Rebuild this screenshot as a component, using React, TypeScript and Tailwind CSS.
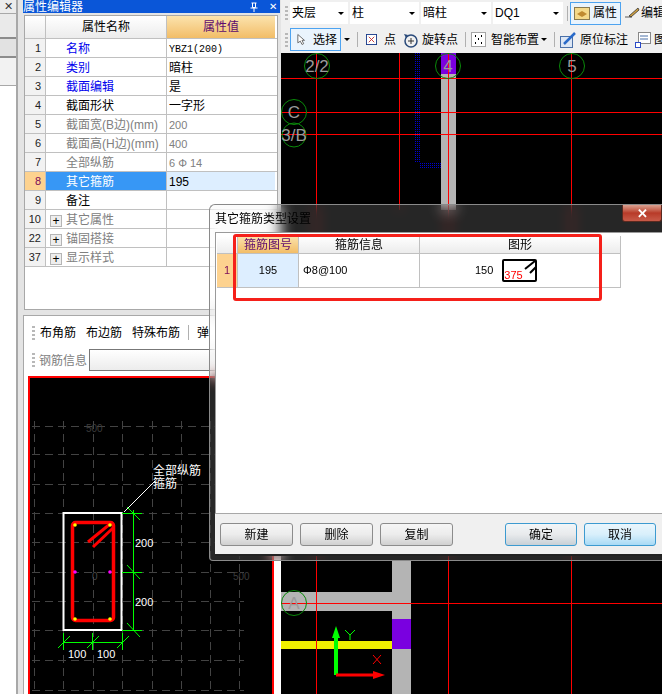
import type { ReactNode } from 'react';

const FONT = "font-['Liberation_Sans','Noto_Sans_CJK_SC',sans-serif]";

type Row = {
  no: string;
  name: string;
  value?: string;
  tone: 'blue' | 'black' | 'gray';
  plus?: boolean;
  active?: boolean;
  mono?: boolean;
};

const ROWS: Row[] = [
  { no: '1', name: '名称', value: 'YBZ1(200)', tone: 'blue', mono: true },
  { no: '2', name: '类别', value: '暗柱', tone: 'blue' },
  { no: '3', name: '截面编辑', value: '是', tone: 'blue' },
  { no: '4', name: '截面形状', value: '一字形', tone: 'black' },
  { no: '5', name: '截面宽(B边)(mm)', value: '200', tone: 'gray' },
  { no: '6', name: '截面高(H边)(mm)', value: '400', tone: 'gray' },
  { no: '7', name: '全部纵筋', value: '6 Φ 14', tone: 'gray' },
  { no: '8', name: '其它箍筋', value: '195', tone: 'black', active: true },
  { no: '9', name: '备注', tone: 'black' },
  { no: '10', name: '其它属性', tone: 'gray', plus: true },
  { no: '22', name: '锚固搭接', tone: 'gray', plus: true },
  { no: '37', name: '显示样式', tone: 'gray', plus: true },
];

function Grip() {
  return (
    <div className="flex w-[3px] shrink-0 flex-col gap-[2px]">
      {[0, 1, 2, 3].map(i => (
        <div key={i} className="h-[2px] w-[3px] bg-[#b8b8b8]" />
      ))}
    </div>
  );
}

function Sep() {
  return <div className="h-[15px] w-px shrink-0 bg-[#b0b0b0]" />;
}

function Caret() {
  return <div className="h-0 w-0 shrink-0 border-x-[3px] border-t-[3px] border-x-transparent border-t-black" />;
}

function PropertyTable() {
  return (
    <div className="ml-px mr-[3px] mt-[2px] flex h-[295px] flex-col border border-[#a8a8a8] bg-white">
      <div className="flex h-[23px] border-b border-[#c0c0c0] text-[12px]">
        <div className="w-[21px] border-r border-[#c0c0c0] bg-gradient-to-b from-white to-[#ececec]" />
        <div className="flex w-[121px] items-center justify-center border-r border-[#c0c0c0] bg-gradient-to-b from-white to-[#ececec] text-black">
          属性名称
        </div>
        <div className="flex w-[108px] items-center justify-center bg-gradient-to-b from-[#fbe3ad] to-[#f2bd66] text-[#5d0a6e]">
          属性值
        </div>
      </div>
      {ROWS.map(r => (
        <div key={r.no} className="flex h-[19px] border-b border-[#c0c0c0] text-[12px] leading-[15px]">
          <div
            className={`w-[21px] border-r border-[#c0c0c0] pr-1 pt-[2px] text-right text-[11px] ${
              r.active ? 'bg-[#fdd28f] text-[#7a0a5a]' : 'bg-[#f2f2f2] text-[#222]'
            }`}
          >
            {r.no}
          </div>
          <div
            className={`flex w-[121px] items-center border-r border-[#c0c0c0] pt-[3px] ${
              r.active ? 'bg-[#3797f5] text-white' : ''
            } ${r.tone === 'blue' ? 'text-[#0000ee]' : ''} ${r.tone === 'gray' ? 'text-[#808080]' : ''} ${
              r.tone === 'black' && !r.active ? 'text-black' : ''
            }`}
          >
            <div className="flex w-[20px] justify-center">
              {r.plus && (
                <div className="flex h-[12px] w-[12px] items-center justify-center border border-[#b5b5b5] bg-[#eee] text-[12px] leading-none text-black">
                  +
                </div>
              )}
            </div>
            <span className="whitespace-nowrap">{r.name}</span>
          </div>
          <div
            className={`flex w-[108px] items-center whitespace-pre pl-[2px] pt-[2px] ${r.active ? 'bg-[#ddeeff] text-black' : ''} ${
              r.tone === 'gray' ? 'text-[11px] text-[#808080]' : 'text-black'
            } ${r.mono ? "font-['Liberation_Mono'] text-[10px]" : ''}`}
          >
            {r.value}
          </div>
        </div>
      ))}
    </div>
  );
}

function SectionDrawing() {
  const xs = [34, 63, 93, 122, 152, 181, 210, 239];
  const ys = [427, 455, 485, 514, 543, 573, 602, 631, 661, 691];
  return (
    <svg viewBox="30 379 242 315" className="block h-[315px] w-[242px]">
      <g shapeRendering="crispEdges" stroke="#434343" strokeDasharray="8 5">
        {xs.map(x => (
          <line key={x} x1={x + 0.5} x2={x + 0.5} y1={422} y2={694} />
        ))}
        {ys.map(y => (
          <line key={y} x1={32} x2={244} y1={y + 0.5} y2={y + 0.5} />
        ))}
      </g>
      <text x="86" y="433" fontSize="10" fill="#3c3c3c">500</text>
      <text x="92" y="581" fontSize="10" fill="#4a4a4a">0</text>
      <text x="233" y="581" fontSize="10" fill="#3c3c3c">500</text>

      <rect x="63.5" y="514" width="58" height="117" fill="none" stroke="#fff" strokeWidth="2" />
      <rect x="72.5" y="523.5" width="41" height="98" rx="3" fill="none" stroke="#f00" strokeWidth="3.5" />
      <line x1="110" y1="525" x2="88" y2="543" stroke="#f00" strokeWidth="3" />
      <line x1="113" y1="529" x2="93" y2="548" stroke="#f00" strokeWidth="3" />
      {[[75, 526], [110, 526], [75, 620], [110, 620]].map(([cx, cy]) => (
        <circle key={`${cx}-${cy}`} cx={cx} cy={cy} r="1.8" fill="#ff0" />
      ))}
      {[75, 110].map(cx => (
        <circle key={cx} cx={cx} cy="573" r="1.8" fill="#f0f" />
      ))}

      <g stroke="#0f0" strokeWidth="1">
        <line x1="133.5" y1="511" x2="133.5" y2="631" />
        <line x1="122" y1="514.5" x2="142" y2="514.5" />
        <line x1="122" y1="573.5" x2="142" y2="573.5" />
        <line x1="122" y1="631.5" x2="142" y2="631.5" />
        <line x1="127" y1="508" x2="140" y2="521" />
        <line x1="127" y1="566" x2="140" y2="580" />
        <line x1="127" y1="624" x2="140" y2="638" />
        <line x1="63" y1="643.5" x2="122" y2="643.5" />
        <line x1="63.5" y1="634" x2="63.5" y2="651" />
        <line x1="92.5" y1="634" x2="92.5" y2="651" />
        <line x1="122.5" y1="634" x2="122.5" y2="651" />
        <line x1="58" y1="649" x2="70" y2="637" />
        <line x1="87" y1="649" x2="99" y2="637" />
        <line x1="117" y1="649" x2="129" y2="637" />
      </g>
      <g fill="#fff" fontSize="11">
        <text x="135" y="548">200</text>
        <text x="135" y="607">200</text>
        <text x="68" y="659">100</text>
        <text x="97" y="659">100</text>
        <text x="153" y="476" fontSize="12">全部纵筋</text>
        <text x="153" y="489" fontSize="12">箍筋</text>
      </g>
      <line x1="124" y1="513" x2="155" y2="482" stroke="#fff" />
    </svg>
  );
}

function Axis({ cx, cy, label, r = 12.5 }: { cx: number; cy: number; label: string; r?: number }) {
  return (
    <>
      <circle cx={cx} cy={cy} r={r} fill="none" stroke="#0a8a0a" />
      <text x={cx} y={cy + 6} textAnchor="middle" fontSize="17" fill="#9a9a9a" fontFamily="Liberation Sans">
        {label}
      </text>
    </>
  );
}

function PlanDrawing() {
  return (
    <svg viewBox="281 53 381 641" className="block h-[641px] w-[381px]">
      <rect x="441" y="53" width="15" height="157" fill="#b4b4b4" />
      <rect x="441" y="53" width="15" height="21" fill="#7a00e0" />
      <rect x="392" y="561" width="19" height="133" fill="#b4b4b4" />
      <rect x="281" y="592" width="111" height="19" fill="#b4b4b4" />
      <rect x="281" y="641" width="111" height="8" fill="#f0f000" />
      <rect x="392" y="619" width="19" height="30" fill="#7a00e0" />
      <g fill="none" stroke="#0000c8" strokeDasharray="1 1" shapeRendering="crispEdges">
        <path d="M415.5 53V162" />
        <path d="M417.5 53V162" />
        <path d="M419.5 53V162" />
        <path d="M420 163.5H441" />
        <path d="M420 165.5H441" />
        <path d="M420 167.5H441" />
      </g>

      <g stroke="#f00">
        <line x1="316.5" x2="316.5" y1="53" y2="694" />
        <line x1="399.5" x2="399.5" y1="53" y2="210" />
        <line x1="448.5" x2="448.5" y1="53" y2="694" />
        <line x1="571.5" x2="571.5" y1="53" y2="694" />
        <line x1="281" x2="662" y1="78.5" y2="78.5" />
        <line x1="281" x2="662" y1="112.5" y2="112.5" />
        <line x1="281" x2="662" y1="134.5" y2="134.5" />
        <line x1="281" x2="662" y1="603.5" y2="603.5" />
      </g>

      <Axis cx={317} cy={66} label="2/2" />
      <Axis cx={448} cy={66} label="4" />
      <Axis cx={572} cy={66} label="5" />
      <Axis cx={294} cy={112} label="C" />
      <Axis cx={294} cy={135} label="3/B" r={12} />
      <Axis cx={294} cy={603} label="A" />

      <line x1="336" x2="336" y1="634" y2="675" stroke="#0f0" strokeWidth="4" />
      <polygon points="336,626 340,638 332,638" fill="#0f0" />
      <line x1="336" x2="376" y1="675" y2="675" stroke="#f00" strokeWidth="3" />
      <polygon points="385,675 373,671 373,679" fill="#f00" />
      <path d="M345 630l5 5 5-5M350 635v5" fill="none" stroke="#0f0" />
      <path d="M373 655l8 9M381 655l-8 9" fill="none" stroke="#f00" />
    </svg>
  );
}

function DialogButton({ children, tone = 'plain' }: { children: ReactNode; tone?: 'plain' | 'focus' | 'hover' }) {
  const look =
    tone === 'plain'
      ? 'w-[73px] h-[23px] border-[#8c8c8c] bg-gradient-to-b from-[#f6f6f6] via-[#ececec] to-[#d0d0d0]'
      : tone === 'focus'
        ? 'w-[72px] h-[23px] border-[#3c9ad0] bg-gradient-to-b from-[#f2f6f8] via-[#e8eaec] to-[#c8d0d6]'
        : 'w-[72px] h-[23px] border-[#3c9ad0] bg-gradient-to-b from-[#eaf6fd] via-[#d8effb] to-[#a8daf5]';
  return (
    <div className={`flex items-center justify-center rounded-[3px] border pt-px text-[12px] text-black ${look}`}>
      {children}
    </div>
  );
}

function Dialog() {
  return (
    <div className="absolute left-[209px] top-[204px] flex h-[357px] w-[453px] flex-col rounded-tl-[6px] rounded-bl-[4px] border border-r-0 border-[#8a8a8a] bg-white/15 pl-[5px] backdrop-blur-[7px]">
      <div className="flex h-[27px] shrink-0 items-center justify-between">
        <span className="text-[12px] text-black">其它箍筋类型设置</span>
        <div className="mb-[10px] flex h-[17px] w-[40px] items-center justify-center rounded-b-[3px] border border-t-0 border-[#5a2a20] bg-gradient-to-b from-[#d9a090] via-[#b83a28] to-[#c85a48] text-[13px] font-bold leading-none text-white">
          ✕
        </div>
      </div>
      <div className="flex h-[281px] shrink-0 flex-col border-t border-l border-[#9a9a9a] bg-white pl-px pt-[3px]">
        <div className="flex h-[18px] w-[404px] border-b border-[#c0c0c0] text-[12px]">
          <div className="w-[21px] border-r border-[#c0c0c0] bg-gradient-to-b from-white to-[#ececec]" />
          <div className="flex w-[61px] items-center justify-center border-r border-[#c0c0c0] bg-gradient-to-b from-[#fbe3ad] to-[#f2bd66] text-[#5d0a6e]">
            箍筋图号
          </div>
          <div className="flex w-[121px] items-center justify-center border-r border-[#c0c0c0] bg-gradient-to-b from-white to-[#ececec]">
            箍筋信息
          </div>
          <div className="flex flex-1 items-center justify-center border-r border-[#c0c0c0] bg-gradient-to-b from-white to-[#ececec]">
            图形
          </div>
        </div>
        <div className="flex h-[34px] w-[404px] border-b border-[#c0c0c0] text-[11px]">
          <div className="flex w-[21px] items-center justify-center border-r border-[#c0c0c0] bg-[#fdd28f] text-[#7a0a5a]">
            1
          </div>
          <div className="flex w-[61px] items-center justify-center border-r border-[#c0c0c0] bg-[#ddeeff]">195</div>
          <div className="flex w-[121px] items-center border-r border-[#c0c0c0] pl-[4px]">Φ8@100</div>
          <div className="flex flex-1 items-center border-r border-[#c0c0c0] pl-[55px]">
            <span className="mr-[9px]">150</span>
            <div className="relative h-[23px] w-[35px] rounded-[2px] border-2 border-black">
              <span className="absolute bottom-[-1px] left-[0px] text-[11px] leading-none text-[#f00]">375</span>
              <svg viewBox="0 0 31 19" className="absolute left-0 top-0 h-[19px] w-[31px]">
                <path d="M21 8L31 0M26 12L33 5" stroke="#000" strokeWidth="2" fill="none" />
              </svg>
            </div>
          </div>
        </div>
      </div>
      <div className="flex h-[43px] shrink-0 items-center border-t border-b-2 border-[#a8a8a8] border-b-[#222] bg-[#f0f0f0] pl-[5px]">
        <div className="flex gap-[7px]">
          <DialogButton>新建</DialogButton>
          <DialogButton>删除</DialogButton>
          <DialogButton>复制</DialogButton>
        </div>
        <div className="ml-[52px] flex gap-[7px]">
          <DialogButton tone="focus">确定</DialogButton>
          <DialogButton tone="hover">取消</DialogButton>
        </div>
      </div>
      {/* 红色标注框 */}
      <div className="absolute left-[23px] top-[29px] h-[67px] w-[369px] rounded-[3px] border-[3px] border-[#f5201a]" />
    </div>
  );
}

export default function App() {
  return (
    <div className={`relative flex h-[694px] w-[662px] overflow-hidden bg-[#e4e4e4] text-black ${FONT}`}>
      {/* 最左侧窄栏 */}
      <div className="flex w-[18px] shrink-0 flex-col border-r-2 border-[#a8a8a8] bg-white">
        <div className="flex h-[14px] items-center justify-end border-b border-[#a8a8a8] bg-[#ececec] pr-[3px] text-[11px] leading-none text-[#333]">
          ✕
        </div>
        <div className="h-[23px] bg-[#eaeaea]" />
        <div className="h-[21px] border-y-2 border-[#8c8c8c] bg-[#e2e2e2]" />
        <div className="h-[28px] border-b border-[#a8a8a8] bg-[#f2f2f2]" />
      </div>

      {/* 属性编辑器 + 截面 */}
      <div className="flex w-[263px] shrink-0 flex-col pl-[5px]">
        <div className="mr-px flex h-[13px] items-center justify-between bg-[#0a56d8] text-[12px] leading-none text-white">
          <span>属性编辑器</span>
          <span className="flex items-center gap-[10px] pr-[3px] text-[10px]">
            <svg viewBox="0 0 10 10" className="h-[10px] w-[10px]">
              <path d="M2.5 1h5M3.5 1v4.5h3V1M1.5 6h7M5 6v4" fill="none" stroke="#fff" />
            </svg>
            <span>✕</span>
          </span>
        </div>
        <PropertyTable />
        <div className="mt-[5px] flex h-[379px] flex-col border-l border-t border-[#a8a8a8] bg-white pl-[4px] pr-[7px] pt-[3px]">
          <div className="flex h-[24px] shrink-0 items-center pl-[4px] pt-[3px] text-[12px]">
            <Grip />
            <span className="ml-[5px] whitespace-nowrap">布角筋</span>
            <span className="ml-[10px] whitespace-nowrap">布边筋</span>
            <span className="ml-[10px] whitespace-nowrap">特殊布筋</span>
            <div className="ml-[8px]"><Sep /></div>
            <span className="ml-[8px]">弹</span>
          </div>
          <div className="mt-[3px] flex h-[28px] shrink-0 items-center pl-[4px] text-[12px] text-[#808080]">
            <Grip />
            <span className="ml-[4px] whitespace-nowrap pt-[2px]">钢筋信息</span>
            <div className="ml-[2px] h-[22px] w-[130px] border border-[#777] bg-gradient-to-b from-white to-[#ececec]" />
          </div>
          <div className="mt-[2px] flex-1 overflow-hidden border-x-2 border-t-2 border-[#f00] bg-black">
            <SectionDrawing />
          </div>
        </div>
      </div>

      {/* 右侧工具栏 + 平面图 */}
      <div className="flex min-w-0 flex-1 flex-col">
        <div className="flex h-[26px] shrink-0 items-center bg-[#f0f0f0] pl-[4px] text-[12px]">
          <Grip />
          {[
            ['夹层', 'w-[58px]'],
            ['柱', 'w-[69px]'],
            ['暗柱', 'w-[70px]'],
            ['DQ1', 'w-[70px]'],
          ].map(([label, width]) => (
            <div key={label} className={`ml-[2px] flex h-[22px] shrink-0 items-center justify-between bg-white px-[2px] ${width}`}>
              <span className="whitespace-nowrap">{label}</span>
              <span className="mr-[2px]">
                <Caret />
              </span>
            </div>
          ))}
          <div className="ml-[4px]"><Sep /></div>
          <div className="ml-[2px] flex h-[23px] w-[51px] shrink-0 items-center gap-[3px] border border-[#4da3f0] bg-[#eaf4fd] pl-[3px]">
            <svg viewBox="0 0 16 16" className="h-[16px] w-[16px] shrink-0">
              <rect x="0.5" y="2.5" width="15" height="12" fill="#f5d98a" stroke="#8a7a50" />
              <path d="M3 9l5-3 5 3-5 3z" fill="#c08a30" />
            </svg>
            <span className="whitespace-nowrap">属性</span>
          </div>
          <svg viewBox="0 0 16 16" className="ml-[3px] h-[16px] w-[16px] shrink-0">
            <path d="M1 12h7M5 11L14 3l1 2-8 7z" fill="#d0a040" stroke="#333" strokeWidth="0.8" />
          </svg>
          <span className="ml-[1px] whitespace-nowrap">编辑</span>
        </div>
        <div className="flex h-[27px] shrink-0 items-center overflow-hidden bg-[#f0f0f0] pl-[4px] text-[12px]">
          <Grip />
          <div className="ml-[2px] flex h-[23px] w-[51px] shrink-0 items-center gap-[6px] border border-[#4da3f0] bg-[#eaf4fd] pl-[6px]">
            <svg viewBox="0 0 12 14" className="h-[13px] w-[10px] shrink-0">
              <path d="M1 1v10l3-2 2 4 2-1-2-4h3z" fill="#fff" stroke="#555" />
            </svg>
            <span className="whitespace-nowrap">选择</span>
          </div>
          <div className="ml-[3px]"><Caret /></div>
          <div className="ml-[7px]"><Sep /></div>
          <svg viewBox="0 0 12 12" className="ml-[8px] h-[11px] w-[11px] shrink-0">
            <rect x="0.5" y="0.5" width="11" height="11" fill="#fff" stroke="#1a3a8a" />
            <path d="M3 3l6 6M9 3l-6 6" stroke="#c03030" />
          </svg>
          <span className="ml-[7px] whitespace-nowrap">点</span>
          <svg viewBox="0 0 16 16" className="ml-[7px] h-[16px] w-[16px] shrink-0">
            <circle cx="8" cy="9" r="6" fill="none" stroke="#2a4a7a" strokeWidth="1.5" />
            <path d="M5 9h6M8 6v6" stroke="#333" />
            <path d="M1 2l4 1-2 3z" fill="#2a4a7a" />
          </svg>
          <span className="ml-[3px] whitespace-nowrap">旋转点</span>
          <div className="ml-[7px]"><Sep /></div>
          <svg viewBox="0 0 15 15" className="ml-[5px] h-[15px] w-[15px] shrink-0">
            <rect x="0.5" y="0.5" width="14" height="14" fill="#fff" stroke="#555" strokeDasharray="1 1" />
            <path d="M4 4h1M10 4h1M7 7h1M4 11h1M10 11h1" stroke="#000" strokeWidth="2" />
          </svg>
          <span className="ml-[5px] whitespace-nowrap">智能布置</span>
          <div className="ml-[2px]"><Caret /></div>
          <div className="ml-[7px]"><Sep /></div>
          <svg viewBox="0 0 16 16" className="ml-[5px] h-[16px] w-[16px] shrink-0">
            <rect x="0.5" y="4.5" width="12" height="11" fill="#dce6f4" stroke="#4a70a8" />
            <path d="M4 12L15 1" stroke="#2a6ac8" strokeWidth="2.5" />
          </svg>
          <span className="ml-[4px] whitespace-nowrap">原位标注</span>
          <svg viewBox="0 0 16 16" className="ml-[7px] h-[16px] w-[16px] shrink-0">
            <rect x="3.5" y="0.5" width="12" height="11" fill="#fff" stroke="#888" />
            <path d="M5 4h8M5 7h8" stroke="#4a70a8" />
            <rect x="0.5" y="10.5" width="5" height="5" fill="#fff" stroke="#2a4ac8" />
          </svg>
          <span className="ml-[3px] whitespace-nowrap">图</span>
        </div>
        <div className="min-h-0 flex-1 overflow-hidden bg-black">
          <PlanDrawing />
        </div>
      </div>

      <Dialog />
    </div>
  );
}
